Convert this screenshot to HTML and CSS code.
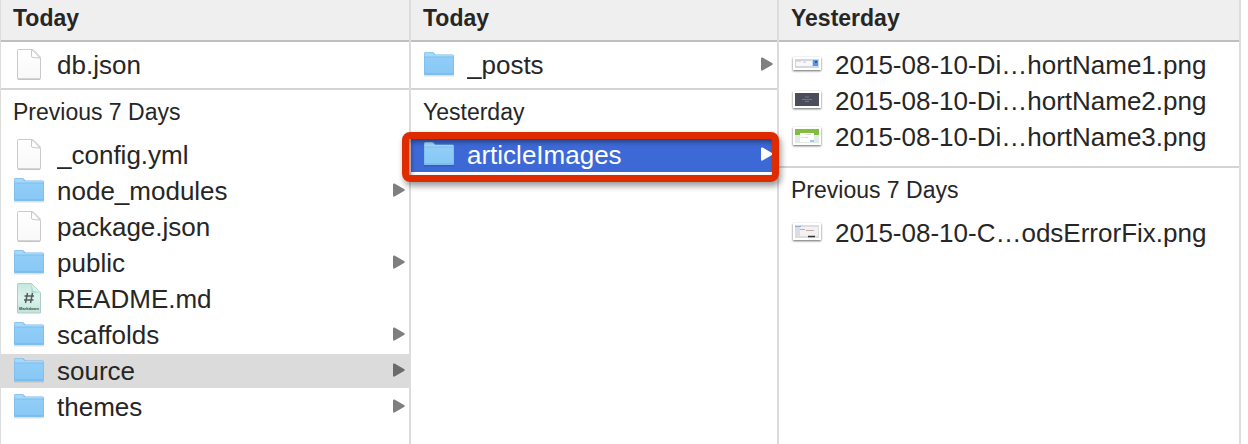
FILE: index.html
```
<!DOCTYPE html>
<html lang="en">
<head>
<meta charset="utf-8">
<title>Files</title>
<link rel="stylesheet" href="styles.css">
</head>
<body>
<svg class="defs" aria-hidden="true">
  <defs>
    <linearGradient id="blue" x1="0" y1="0" x2="0" y2="1"><stop offset="0" stop-color="#91cdf7"/><stop offset="1" stop-color="#88c8f6"/></linearGradient>
    <linearGradient id="paper" x1="0" y1="0" x2="0" y2="1"><stop offset="0" stop-color="#fff"/><stop offset="1" stop-color="#f8f8f8"/></linearGradient>
    <linearGradient id="mint" x1="0" y1="0" x2="0" y2="1"><stop offset="0" stop-color="#c3e8df"/><stop offset="0.5" stop-color="#dcf3ed"/><stop offset="1" stop-color="#bfe3dc"/></linearGradient>
  </defs>
  <symbol id="folder" viewBox="0 0 32 32">
    <path d="M1 27h30v1.500H1z" fill="#000" opacity=".12"/>
    <path d="M1 26V5.500Q1 4 2.500 4H9Q10 4 11 5L12.500 6.500H29.500Q31 6.500 31 8V26Q31 27 30 27H2Q1 27 1 26z" fill="#74b5e5"/>
    <path d="M1.500 8V5.500Q1.500 4.500 2.500 4.500H9L12 7H29.500Q30.500 7 30.500 8V9H1.500z" fill="#a5d9fb"/>
    <path d="M1.500 9h29v17.500h-29z" fill="url(#blue)"/>
    <path d="M1 9h30" stroke="#7cbfed" stroke-width="1"/>
    <path d="M1 25.500h30" stroke="#7ebde8" stroke-width="1"/>
  </symbol>
  <symbol id="file" viewBox="0 0 32 32">
    <path d="M5 1H17.500L28 11V31Q28 32 27 32H5Q4 32 4 31V2Q4 1 5 1z" fill="#000" opacity=".06"/>
    <path d="M5.500 1.500H18Q20 1.500 21 2.500L26.500 8Q27.500 9 27.500 11V30Q27.500 31 26.500 31H5.500Q4.500 31 4.500 30V2.500Q4.500 1.500 5.500 1.500z" fill="url(#paper)" stroke="#cbcbcb"/>
    <path d="M18.500 2V8Q18.500 9.500 20 9.500L27 10L20.500 3z" fill="#fff" stroke="#c9c9c9"/>
    <path d="M5 31.200h22" stroke="#b8b8b8"/>
  </symbol>
  <symbol id="markdown" viewBox="0 0 32 32">
    <path d="M5 1.500H18.500L27.500 10.500V31H4.500V2z" fill="url(#mint)" stroke="#b4cbc5"/>
    <path d="M18.500 2V10.500H27z" fill="#9fd3c5"/>
    <path d="M18.500 2L27.500 10.500L20 9z" fill="#d8f2eb"/>
    <path d="M14.500 11L12.500 21M19.500 11L17.500 21M11.500 14H21M11 18H20.500" stroke="#555d5a" stroke-width="1.500" fill="none"/>
  </symbol>
  <symbol id="arrow" viewBox="0 0 12 14"><path d="M0 1.500Q0 0 1.500.500L11 6Q12.500 7 11 8L1.500 13.500Q0 14 0 12.500z" fill="currentColor"/></symbol>
</svg>
<main class="browser">
  <section class="column">
    <h2 class="heading">Today</h2>
    <ul class="group">
      <li class="row"><svg class="icon"><use href="#file"/></svg><span class="name">db.json</span></li>
    </ul>
    <h3 class="label">Previous 7 Days</h3>
    <ul class="list">
      <li class="row"><svg class="icon"><use href="#file"/></svg><span class="name">_config.yml</span></li>
      <li class="row"><svg class="icon"><use href="#folder"/></svg><span class="name">node_modules</span><svg class="arrow"><use href="#arrow"/></svg></li>
      <li class="row"><svg class="icon"><use href="#file"/></svg><span class="name">package.json</span></li>
      <li class="row"><svg class="icon"><use href="#folder"/></svg><span class="name">public</span><svg class="arrow"><use href="#arrow"/></svg></li>
      <li class="row"><svg class="icon" viewBox="0 0 32 32"><use href="#markdown"/><text class="kind" x="16" y="28" text-anchor="middle">Markdown</text></svg><span class="name">README.md</span></li>
      <li class="row"><svg class="icon"><use href="#folder"/></svg><span class="name">scaffolds</span><svg class="arrow"><use href="#arrow"/></svg></li>
      <li class="row open"><svg class="icon"><use href="#folder"/></svg><span class="name">source</span><svg class="arrow"><use href="#arrow"/></svg></li>
      <li class="row"><svg class="icon"><use href="#folder"/></svg><span class="name">themes</span><svg class="arrow"><use href="#arrow"/></svg></li>
    </ul>
  </section>
  <section class="column">
    <h2 class="heading">Today</h2>
    <ul class="group">
      <li class="row"><svg class="icon"><use href="#folder"/></svg><span class="name">_posts</span><svg class="arrow"><use href="#arrow"/></svg></li>
    </ul>
    <h3 class="label">Yesterday</h3>
    <ul class="list">
      <li class="row selected"><svg class="icon"><use href="#folder"/></svg><span class="name">articleImages</span><svg class="arrow"><use href="#arrow"/></svg></li>
    </ul>
  </section>
  <section class="column">
    <h2 class="heading">Yesterday</h2>
    <ul class="group images">
      <li class="row"><svg class="thumb" viewBox="0 0 32 32"><path class="frame" d="M2 9h28v13H2z"/><path d="M4 11h24v9H4z" fill="#d2d8e2"/><path d="M5 13h16v5H5z" fill="#f6f8fc"/><path d="M22 12h5v6h-5z" fill="#4f98eb"/><path d="M24 13h2v2h-2z" fill="#24609f"/><path d="M5 13h5M12 14h3" stroke="#e8b9c5"/></svg><span class="name">2015-08-10-Di…hortName1.png</span></li>
      <li class="row"><svg class="thumb" viewBox="0 0 32 32"><path class="frame" d="M2 7h28v17H2z"/><path d="M4 9h24v13H4z" fill="#4b4e5a"/><path d="M14 13h4M11 15.500h10M14 17.500h4" stroke="#747782"/></svg><span class="name">2015-08-10-Di…hortName2.png</span></li>
      <li class="row"><svg class="thumb" viewBox="0 0 32 32"><path class="frame" d="M2 7h28v18H2z"/><path d="M4 9h24v14H4z" fill="#e2ebe3"/><path d="M4 9h24v6H4z" fill="#81bd41"/><path d="M9 13h14v9H9z" fill="#fff"/><path d="M14 14.500h6M10 17.500h7" stroke="#ecd3d8"/><path d="M19 20h4v2h-4z" fill="#91cdf5"/></svg><span class="name">2015-08-10-Di…hortName3.png</span></li>
    </ul>
    <h3 class="label">Previous 7 Days</h3>
    <ul class="list">
      <li class="row"><svg class="thumb" viewBox="0 0 32 32"><path class="frame" d="M2 7h28v17H2z"/><path d="M4 9h24v13H4z" fill="#dcdde0"/><path d="M9 11h18v9H9z" fill="#f2f2f2"/><path d="M4 10.500h6" stroke="#8ea9dd"/><path d="M9 13.500h5M15 14.500h8" stroke="#c9a7aa"/><path d="M17 20.500h7" stroke="#333" stroke-width="1.500"/></svg><span class="name">2015-08-10-C…odsErrorFix.png</span></li>
    </ul>
  </section>
</main>
</body>
</html>
```
FILE: styles.css
```
* { box-sizing: border-box; }
body {
  margin: 0;
  background: #fff;
  color: #262626;
  font-family: "Liberation Sans", Arial, sans-serif;
}
.defs { position: absolute; width: 0; height: 0; }
.browser {
  display: grid;
  grid-template-columns: minmax(0, 411fr) minmax(0, 368fr) minmax(0, 462fr);
  min-height: 100vh;
  padding-right: 7px;
}
.column { border-right: 2px solid #dcdcdc; }
.column:first-child { border-left: 1px solid #dcdcdc; }
.heading, .label, .group, .list { margin: 0; }
.heading {
  height: 42px;
  padding: 0 12px;
  border-bottom: 2px solid #bfbfbf;
  background: #efefef;
  font-size: 23px;
  line-height: 37px;
}
.label {
  padding: 0 12px 4px;
  font-size: 23px;
  font-weight: 400;
  line-height: 44px;
}
.group, .list {
  display: grid;
  gap: 2px;
  padding: 0;
  list-style: none;
}
.group { padding: 6px 0; border-bottom: 2px solid #d4d4d4; }
.images { padding-bottom: 12px; }
.row {
  display: flex;
  align-items: center;
  gap: 12px;
  height: 34px;
  padding: 0 4px 0 12px;
}
.name {
  flex: 1;
  min-width: 0;
  overflow: hidden;
  font-size: 26px;
  line-height: 34px;
  white-space: nowrap;
}
.icon, .thumb { flex: none; width: 32px; height: 32px; }
.icon { margin-bottom: 2px; }
.thumb { margin-bottom: 2px; overflow: visible; }
.frame { fill: #fff; filter: drop-shadow(0 1px 1px #0009); }
.kind { font-size: 4px; font-weight: 700; fill: #3f4946; }
.arrow { flex: none; width: 12px; height: 14px; margin-bottom: 2px; color: #7f7f7f; }
.open { background: #dbdbdb; }
.open .arrow { color: #6b6b6b; }
.selected {
  position: relative;
  background: #3d69d7;
  color: #fff;
}
.selected .arrow { color: #fff; }
.selected::after {
  content: "";
  position: absolute;
  inset: -6px -2px -10px -9px;
  border: 7px solid #de2b00;
  border-radius: 8px;
  box-shadow: 2px 4px 6px #0006, inset 2px 3px 5px #0006;
}
```
